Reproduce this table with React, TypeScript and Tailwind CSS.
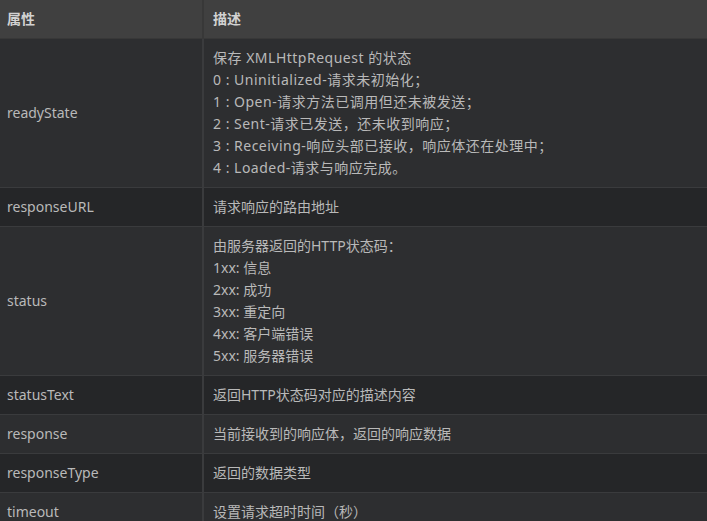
import React from "react";

const rows: { name: string; desc: string[]; wide?: boolean }[] = [
  {
    name: "readyState",
    wide: true,
    desc: [
      "保存 XMLHttpRequest 的状态",
      "0 : Uninitialized-请求未初始化；",
      "1 : Open-请求方法已调用但还未被发送；",
      "2 : Sent-请求已发送，还未收到响应；",
      "3 : Receiving-响应头部已接收，响应体还在处理中；",
      "4 : Loaded-请求与响应完成。",
    ],
  },
  { name: "responseURL", desc: ["请求响应的路由地址"] },
  {
    name: "status",
    desc: [
      "由服务器返回的HTTP状态码：",
      "1xx: 信息",
      "2xx: 成功",
      "3xx: 重定向",
      "4xx: 客户端错误",
      "5xx: 服务器错误",
    ],
  },
  { name: "statusText", desc: ["返回HTTP状态码对应的描述内容"] },
  { name: "response", desc: ["当前接收到的响应体，返回的响应数据"] },
  { name: "responseType", desc: ["返回的数据类型"] },
  { name: "timeout", desc: ["设置请求超时时间（秒）"] },
];

export default function App() {
  return (
    <div
      className="w-[707px] h-[521px] overflow-hidden bg-[#2d2e30] text-[14px] leading-[22px] text-[#b9b9b9]"
      style={{ fontFamily: '"Noto Sans", "Noto Sans CJK SC", sans-serif' }}
    >
      <table className="w-full border-collapse">
        <thead>
          <tr className="bg-[#404040] text-[#d2d2d2] font-bold">
            <th className="w-[203px] h-[38px] px-[7px] text-left border-r-2 border-b border-[#383838]">属性</th>
            <th className="h-[38px] pl-[9px] text-left border-b border-[#383838]">描述</th>
          </tr>
        </thead>
        <tbody>
          {rows.map((r, i) => (
            <tr key={r.name} className={i % 2 === 0 ? "bg-[#2d2e30]" : "bg-[#252628]"}>
              <td className="w-[203px] px-[7px] py-2 align-middle border-r-2 border-b border-[#3a3b3d]">
                {r.name}
              </td>
              <td className={`pl-[9px] pr-2 py-2 border-b border-[#3a3b3d] ${r.wide ? "tracking-[0.5px]" : ""}`}>
                {r.desc.map((d) => (
                  <div key={d}>{d}</div>
                ))}
              </td>
            </tr>
          ))}
        </tbody>
      </table>
    </div>
  );
}
